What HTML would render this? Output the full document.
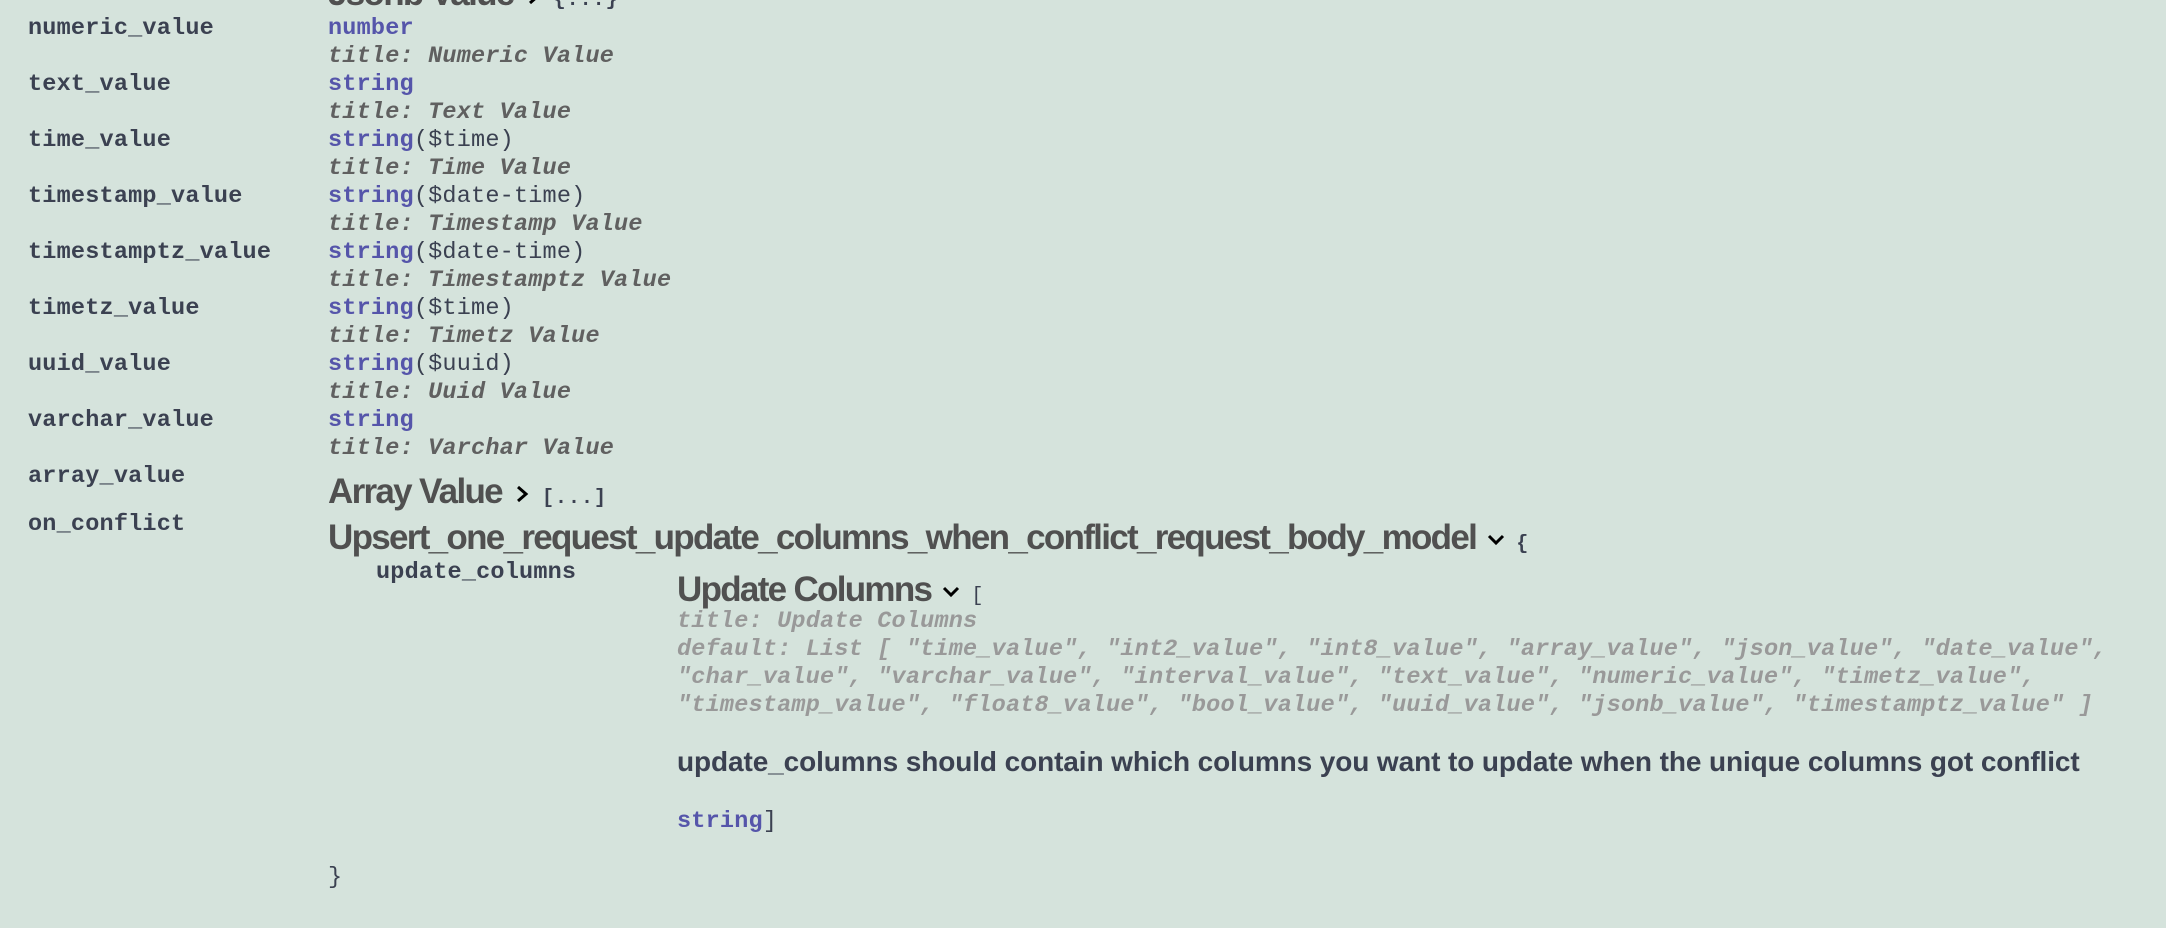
<!DOCTYPE html>
<html><head><meta charset="utf-8"><style>
body{margin:0;width:2166px;height:928px;background:#d5e3dc;overflow:hidden;position:relative;font-family:"Liberation Mono",monospace;}
.a{position:absolute;white-space:nowrap;line-height:28px;}
.l,.t,.ti,.g{font-size:23.5px;letter-spacing:0.2px;font-weight:bold;}
.l{left:28px;color:#3b4151;}
.t{left:328px;color:#3b4151;font-weight:normal;}
.t b{color:#55a;}
.ti{left:328px;font-style:italic;color:#606060;}
.h{font-family:"Liberation Sans",sans-serif;font-weight:bold;color:#505050;letter-spacing:-1.7px;line-height:40px;font-size:35px;}
.br{font-family:"Liberation Mono",monospace;font-size:20px;color:#3b4151;letter-spacing:1px;font-weight:bold;}
.g{left:677px;font-style:italic;color:#999;}
svg{vertical-align:middle}
</style></head><body>
<div class="a h" style="left:328px;top:-26px">Jsonb Value <svg width="24" height="24" viewBox="0 0 24 24"><path d="M8 5l8 7-8 7" stroke="#000" stroke-width="3" fill="none"/></svg> <span class="br">{...}</span></div>

<div class="a l" style="top:15px">numeric_value</div>
<div class="a t" style="top:15px"><b>number</b></div>
<div class="a ti" style="top:43px">title: Numeric Value</div>
<div class="a l" style="top:71px">text_value</div>
<div class="a t" style="top:71px"><b>string</b></div>
<div class="a ti" style="top:99px">title: Text Value</div>
<div class="a l" style="top:127px">time_value</div>
<div class="a t" style="top:127px"><b>string</b>($time)</div>
<div class="a ti" style="top:155px">title: Time Value</div>
<div class="a l" style="top:183px">timestamp_value</div>
<div class="a t" style="top:183px"><b>string</b>($date-time)</div>
<div class="a ti" style="top:211px">title: Timestamp Value</div>
<div class="a l" style="top:239px">timestamptz_value</div>
<div class="a t" style="top:239px"><b>string</b>($date-time)</div>
<div class="a ti" style="top:267px">title: Timestamptz Value</div>
<div class="a l" style="top:295px">timetz_value</div>
<div class="a t" style="top:295px"><b>string</b>($time)</div>
<div class="a ti" style="top:323px">title: Timetz Value</div>
<div class="a l" style="top:351px">uuid_value</div>
<div class="a t" style="top:351px"><b>string</b>($uuid)</div>
<div class="a ti" style="top:379px">title: Uuid Value</div>
<div class="a l" style="top:407px">varchar_value</div>
<div class="a t" style="top:407px"><b>string</b></div>
<div class="a ti" style="top:435px">title: Varchar Value</div>
<div class="a l" style="top:463px">array_value</div>
<div class="a h" style="left:328px;top:472px">Array Value <svg width="24" height="24" viewBox="0 0 24 24"><path d="M8 5l8 7-8 7" stroke="#000" stroke-width="3" fill="none"/></svg> <span class="br">[...]</span></div>
<div class="a l" style="top:511px">on_conflict</div>
<div class="a h" style="left:328px;top:518px">Upsert_one_request_update_columns_when_conflict_request_body_model <svg width="24" height="24" viewBox="0 0 24 24"><path d="M5 8l7 7 7-7" stroke="#000" stroke-width="3" fill="none"/></svg> <span class="br">{</span></div>
<div class="a l" style="left:376px;top:559px">update_columns</div>
<div class="a h" style="left:677px;top:570px">Update Columns <svg width="24" height="24" viewBox="0 0 24 24"><path d="M5 8l7 7 7-7" stroke="#000" stroke-width="3" fill="none"/></svg> <span class="br" style="font-weight:normal">[</span></div>
<div class="a g" style="top:608px">title: Update Columns</div>
<div class="a g" style="top:636px">default: List [ "time_value", "int2_value", "int8_value", "array_value", "json_value", "date_value",</div>
<div class="a g" style="top:664px">"char_value", "varchar_value", "interval_value", "text_value", "numeric_value", "timetz_value",</div>
<div class="a g" style="top:692px">"timestamp_value", "float8_value", "bool_value", "uuid_value", "jsonb_value", "timestamptz_value" ]</div>
<div class="a" style="left:677px;top:744px;font-family:'Liberation Sans',sans-serif;font-weight:bold;font-size:28px;line-height:36px;color:#3b4151;letter-spacing:-0.1px">update_columns should contain which columns you want to update when the unique columns got conflict</div>
<div class="a t" style="left:677px;top:808px"><b style="font-weight:bold">string</b>]</div>
<div class="a t" style="top:864px">}</div>
</body></html>
